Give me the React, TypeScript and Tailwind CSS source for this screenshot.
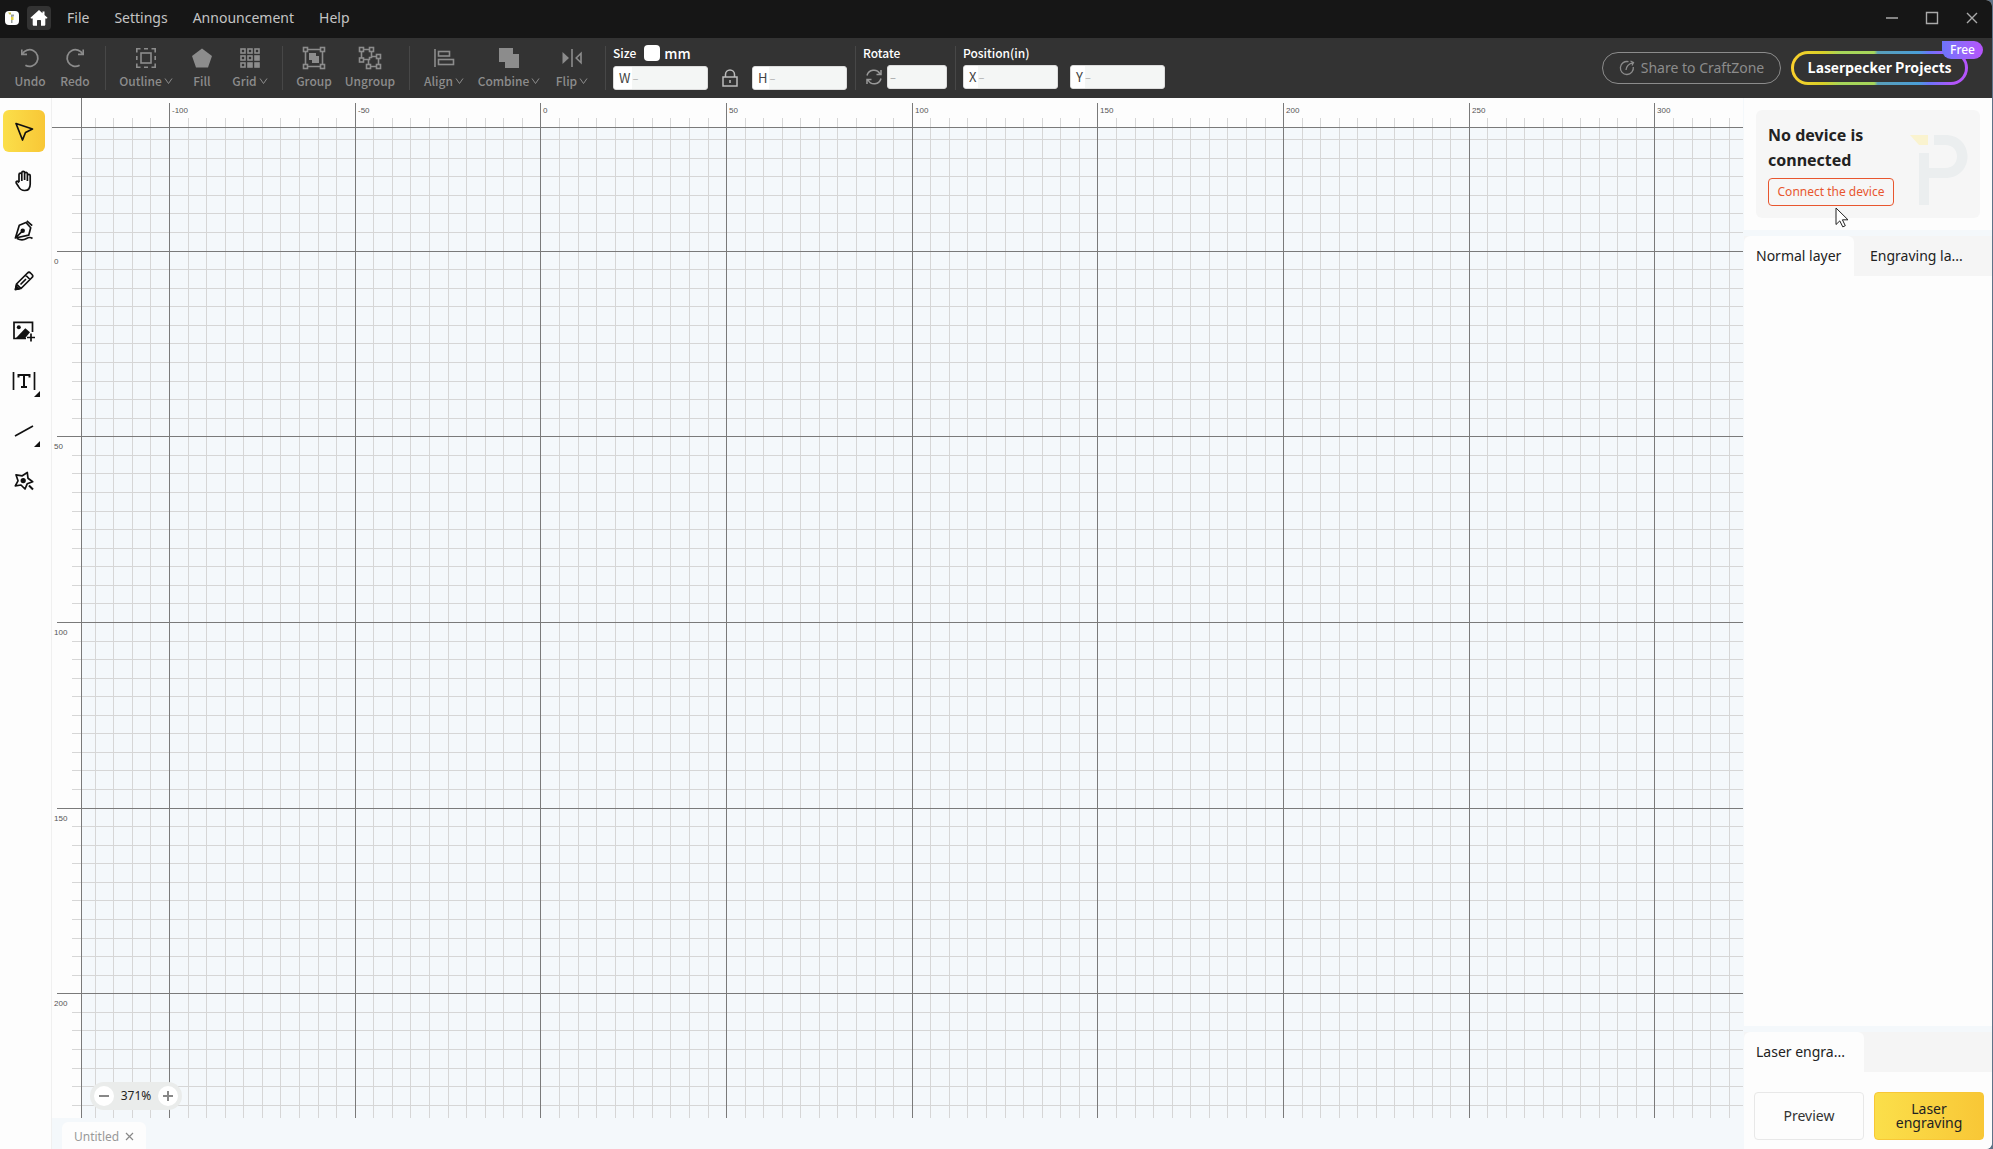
import { useEffect, useRef, useState } from "react";
import type { ReactNode } from "react";

const STEP = 185.67;
const RULER_X = 29;
const RULER_Y = 29;
const ZERO_X = 488.4;
const ZERO_Y = 152.6;

function range(from: number, to: number) {
  return Array.from({ length: Math.max(0, to - from + 1) }, (_, i) => from + i);
}

/** Millimetre grid with rulers along the top and left edges. */
function Grid() {
  const ref = useRef<SVGSVGElement>(null);
  const [size, setSize] = useState({ w: 1691, h: 1020 });
  useEffect(() => {
    const el = ref.current;
    if (!el) return;
    const update = () => setSize({ w: el.clientWidth, h: el.clientHeight });
    update();
    const observer = new ResizeObserver(update);
    observer.observe(el);
    return () => observer.disconnect();
  }, []);
  const minor = STEP / 10;
  const cols = range(Math.ceil((RULER_X + 1 - ZERO_X) / minor), Math.floor(size.w / minor));
  const rows = range(Math.ceil((RULER_Y + 1 - ZERO_Y) / minor), Math.floor(size.h / minor));
  const xs = cols.map((n) => ({ n, p: Math.round(ZERO_X + n * minor) })).filter((c) => c.p < size.w);
  const ys = rows.map((n) => ({ n, p: Math.round(ZERO_Y + n * minor) })).filter((c) => c.p < size.h);
  return (
    <svg ref={ref} className="block h-full w-full" shapeRendering="crispEdges">
      <rect x={RULER_X} y={RULER_Y} width="100%" height="100%" fill="#f4f8fb" />
      {xs.filter((c) => c.n % 10).map((c) => (
        <rect key={c.n} x={c.p} y={20} width={1} height={size.h} fill="#d6d6d6" />
      ))}
      {ys.filter((c) => c.n % 10).map((c) => (
        <rect key={c.n} x={20} y={c.p} width={size.w} height={1} fill="#d6d6d6" />
      ))}
      {xs.filter((c) => c.n % 10 === 0).map((c) => (
        <g key={c.n}>
          <rect x={c.p} y={5} width={1} height={size.h} fill="#7a7a7a" />
          <text x={c.p + 3} y={15} fontSize={8} fill="#555">{c.n * 5}</text>
        </g>
      ))}
      {ys.filter((c) => c.n % 10 === 0).map((c) => (
        <g key={c.n}>
          <rect x={5} y={c.p} width={size.w} height={1} fill="#7a7a7a" />
          <text x={2} y={c.p + 13} fontSize={8} fill="#555">{c.n * 5}</text>
        </g>
      ))}
      <rect x={0} y={RULER_Y} width={size.w} height={1} fill="#7a7a7a" />
      <rect x={RULER_X} y={0} width={1} height={size.h} fill="#7a7a7a" />
    </svg>
  );
}

function Chevron() {
  return (
    <svg width="9" height="8" viewBox="0 0 9 8" fill="none" stroke="currentColor">
      <path d="M1 1.5 4.5 6.5 8 1.5" />
    </svg>
  );
}

function Tool({ label, icon, width, menu }: { label: string; icon: ReactNode; width: string; menu?: boolean }) {
  return (
    <button className={`flex ${width} shrink-0 flex-col items-center gap-[3px] pt-2 text-[#8c8c8c]`}>
      <svg width="24" height="24" viewBox="0 0 24 24" fill="none" stroke="currentColor" strokeWidth="1.6">
        {icon}
      </svg>
      <span className="flex items-center gap-0.5 whitespace-nowrap text-[12px] leading-4 font-medium">
        {label}
        {menu && <Chevron />}
      </span>
    </button>
  );
}

function Sep() {
  return <div className="mt-2 h-11 w-px shrink-0 bg-[#474747]" />;
}

function Field({ name, label }: { name: string; label: string }) {
  return (
    <label className="flex h-6 w-[95px] shrink-0 overflow-hidden rounded-[3px] border border-[#dcdcdc] bg-[#f4f6f5] font-normal text-[#444]">
      <span className="bg-white pr-0.5 pl-[5px] text-[13px] leading-[22px]">{name}</span>
      <input aria-label={label} placeholder="–" className="w-full min-w-0 bg-transparent text-[11px] leading-[22px] outline-none placeholder:text-[#aaa]" />
    </label>
  );
}

const corner = (x: number, y: number) => <rect key={`${x}-${y}`} x={x} y={y} width="4" height="4" />;

const undo = (
  <>
    <path d="M3.8 3.5v4.9h5.2" strokeWidth="1.6" />
    <path d="M4.2 8.2A8.3 8.3 0 1 1 7.4 19.2" strokeWidth="1.8" />
  </>
);
const outline = (
  <>
    <path d="M2.8 6.5V2.8h3.7M17.5 2.8h3.7v3.7M21.2 17.5v3.7h-3.7M6.5 21.2H2.8v-3.7M10 2.8h4M10 21.2h4M2.8 10v4M21.2 10v4" />
    <rect x="7" y="7" width="10" height="10" />
  </>
);
const fill = <path d="M12 2.5 22 10l-4 11.5H6L2 10Z" fill="currentColor" stroke="none" />;
const gridIcon = (
  <>
    {[[3, 3], [10, 3], [17, 3], [3, 10], [10, 10], [3, 17]].map(([x, y]) => corner(x, y))}
    <g fill="currentColor">{[[17, 10], [10, 17], [17, 17]].map(([x, y]) => corner(x, y))}</g>
  </>
);
const group = (
  <>
    {[[1.5, 1.5], [18.5, 1.5], [1.5, 18.5], [18.5, 18.5]].map(([x, y]) => corner(x, y))}
    <path d="M5.5 3.5h13M5.5 20.5h13M3.5 5.5v13M20.5 5.5v13" />
    <path d="M7 7h7v3h3v7h-7v-3H7Z" fill="currentColor" stroke="none" />
  </>
);
const ungroup = (
  <>
    {[[1.5, 1.5], [11.5, 1.5], [1.5, 12], [18.5, 8.5], [18.5, 18.5], [8.5, 18.5]].map(([x, y]) => corner(x, y))}
    <path d="M5.5 3.5h6M3.5 5.5V12M13.5 5.5v6h-2v2H5.5M20.5 12.5v6M12.5 20.5h6M10.5 18.5v-5M13.5 10.5h5" />
  </>
);
const align = (
  <>
    <path d="M3 3v18" />
    <rect x="6.5" y="5.5" width="11" height="4.5" />
    <rect x="6.5" y="13.5" width="15" height="5" />
  </>
);
const combine = <path d="M2 2h14v6h6v14H8v-6H2Z" fill="currentColor" stroke="none" />;
const flip = (
  <>
    <path d="M12 3v18" />
    <path d="M2.5 6 9 12l-6.500 6Z" fill="currentColor" stroke="none" />
    <path d="M21 7.300v9.400L16.200 12Z" />
  </>
);

function SideTool({ label, children, active, more }: { label: string; children: ReactNode; active?: boolean; more?: boolean }) {
  return (
    <button
      aria-label={label}
      className={`relative flex size-[42px] items-center justify-center rounded-md text-[#111] ${active ? "bg-linear-to-r from-[#fbdf4a] to-[#f8c736]" : ""}`}
    >
      <svg width="24" height="24" viewBox="0 0 24 24" fill="none" stroke="currentColor" strokeWidth="1.7" strokeLinejoin="round">
        {children}
      </svg>
      {more && (
        <svg className="absolute right-[5px] bottom-[5px]" width="6" height="6" viewBox="0 0 6 6">
          <path d="M6 0v6H0Z" fill="currentColor" />
        </svg>
      )}
    </button>
  );
}

function TopBar() {
  return (
    <header className="flex h-[38px] shrink-0 items-center bg-[#161616] pb-0.5 pl-[5px] text-[#c4c4c4]">
      <span className="flex size-[14px] items-center justify-center rounded-[4px] bg-white">
        <svg width="8" height="12" viewBox="0 0 8 12">
          <path d="M0 .5h3v2H1.500Z" fill="#c9c24a" />
          <path d="M3 2.500h3V4.500H4.500V11H3Z" fill="#9aa0a0" />
          <path d="M3 5h2.500v3H3Z" fill="#e3d040" />
        </svg>
      </span>
      <button aria-label="Home" className="ml-2 flex size-6 items-center justify-center rounded-[4px] bg-[#333] text-white">
        <svg width="18" height="18" viewBox="0 0 18 18" fill="currentColor">
          <path d="M9 1 .7 8.600c-.3.400-.1.900.4.900H2.700V15.500c0 .8.500 1.300 1.300 1.300h3V12c0-.600.400-1 1-1h2c.6 0 1 .400 1 1v4.800h3c.8 0 1.300-.5 1.300-1.300V9.500h1.600c.5 0 .7-.5.4-.900L14.500 6V2.500h-2v1.700Z" />
        </svg>
      </button>
      <nav className="flex flex-1 gap-[25px] pl-4 font-['Noto_Sans'] text-[14px] leading-5">
        <button>File</button>
        <button>Settings</button>
        <button>Announcement</button>
        <button>Help</button>
      </nav>
      <div className="flex">
        {[
          { n: "Minimize", d: "M4 10h12" },
          { n: "Maximize", d: "M4.500 4.500h11v11h-11Z" },
          { n: "Close", d: "M5 5l10 10M15 5 5 15" },
        ].map((b) => (
          <button key={b.n} aria-label={b.n} className="flex w-10 justify-center">
            <svg width="20" height="20" viewBox="0 0 20 20" fill="none" stroke="#aaa" strokeWidth="1.400">
              <path d={b.d} />
            </svg>
          </button>
        ))}
      </div>
    </header>
  );
}

function Toolbar() {
  return (
    <div className="flex h-[60px] shrink-0 bg-[#333] pl-2 text-[12px] font-medium text-white">
      <Tool label="Undo" icon={undo} width="w-11" />
      <Tool label="Redo" icon={<g transform="translate(24 0) scale(-1 1)">{undo}</g>} width="w-[46px]" />
      <div className="w-[7px]" />
      <Sep />
      <div className="w-2" />
      <Tool label="Outline" icon={outline} width="w-16" menu />
      <Tool label="Fill" icon={fill} width="w-12" />
      <Tool label="Grid" icon={gridIcon} width="w-12" menu />
      <div className="w-2" />
      <Sep />
      <div className="w-[7px]" />
      <Tool label="Group" icon={group} width="w-12" />
      <Tool label="Ungroup" icon={ungroup} width="w-16" />
      <div className="w-[7px]" />
      <Sep />
      <div className="w-[7px]" />
      <Tool label="Align" icon={align} width="w-[54px]" menu />
      <Tool label="Combine" icon={combine} width="w-[76px]" menu />
      <Tool label="Flip" icon={flip} width="w-[50px]" menu />
      <div className="w-2" />
      <Sep />
      <div className="flex flex-col gap-[5px] pt-1.5 pr-2 pl-[7px]">
        <label className="flex h-[17px] items-center gap-2 leading-4">
          Size
          <span className="flex items-center gap-1 text-[14px]">
            <input type="checkbox" className="size-4 appearance-none rounded-[4px] bg-white" />
            mm
          </span>
        </label>
        <div className="flex">
          <Field name="W" label="Width" />
          <button aria-label="Lock ratio" className="flex w-11 items-center justify-center text-[#bbb]">
            <svg width="16" height="18" viewBox="0 0 16 18" fill="none" stroke="currentColor" strokeWidth="1.500">
              <path d="M1 8h14v9H1ZM3.500 8V5.500a4.500 4.500 0 0 1 9 0V8M8 11v3" />
            </svg>
          </button>
          <Field name="H" label="Height" />
        </div>
      </div>
      <Sep />
      <div className="flex flex-col gap-[3px] pt-[7px] pr-2 pl-[7px]">
        <span className="h-[17px] leading-4">Rotate</span>
        <div className="flex items-center">
          <svg className="mr-1 ml-0.5" width="18" height="18" viewBox="0 0 18 18" fill="none" stroke="#999" strokeWidth="1.500">
            <path d="M2 7.500A7 7 0 0 1 15 6M16 2v4.500h-4.500M16 10.500A7 7 0 0 1 3 12M2 16v-4.500h4.500" />
          </svg>
          <input aria-label="Rotate" placeholder="–" className="h-6 w-[60px] rounded-[3px] border border-[#dcdcdc] bg-[#f4f6f5] px-0.5 text-[11px] text-[#555] outline-none placeholder:text-[#aaa]" />
        </div>
      </div>
      <Sep />
      <div className="flex flex-col gap-[3px] px-[7px] pt-[7px]">
        <span className="h-[17px] leading-4">Position(in)</span>
        <div className="flex gap-3">
          <Field name="X" label="X position" />
          <Field name="Y" label="Y position" />
        </div>
      </div>
      <div className="flex flex-1 items-center justify-end gap-[10px] pr-6">
        <button className="flex h-8 w-[179px] items-center justify-center gap-1.5 rounded-full border border-[#8c8c8c] pb-px font-['Noto_Sans'] text-[14px] font-normal whitespace-nowrap text-[#8c8c8c]">
          <svg width="16" height="16" viewBox="0 0 16 16" fill="none" stroke="currentColor" strokeWidth="1.300">
            <path d="M9.500 1.700A6.500 6.500 0 1 0 14.300 7M7 10c.3-3.500 2.500-6 7-7.300M11.500 1l3 1.500-1.500 3" />
          </svg>
          Share to CraftZone
        </button>
        <div className="relative">
          <button className="h-[34px] w-[177px] rounded-full bg-[linear-gradient(90deg,#fbd02c_0%,#d8d028_18%,#a6d65a_28%,#a6d65a_47%,#5a9fb8_49%,#4a9fd8_72%,#6b74fb_78%,#b455fb_92%)] p-[3px]">
            <span className="flex h-full items-center justify-center rounded-full bg-[#333] pb-px text-[14px] font-bold whitespace-nowrap">Laserpecker Projects</span>
          </button>
          <span className="absolute -top-2.5 -right-[15px] h-[18px] rounded-r-full rounded-bl-full bg-linear-to-r from-[#6b74fb] to-[#b653fb] px-2 font-['Noto_Sans'] text-[12px] leading-[18px]">
            Free
          </span>
        </div>
      </div>
    </div>
  );
}

function Sidebar() {
  return (
    <aside className="flex w-[52px] shrink-0 flex-col gap-2 border-r border-[#f0f0f0] bg-[#fdfdfd] pt-3 pl-[3px]">
      <SideTool label="Select" active>
        <path d="M4 4.500 20.500 10l-7 3.500L10.500 21Z" />
      </SideTool>
      <SideTool label="Pan">
        <path d="M7 13V5.500a1.400 1.400 0 0 1 2.800 0V12M9.800 11V3.800a1.400 1.400 0 0 1 2.800 0V11M12.600 11V4.800a1.400 1.400 0 0 1 2.800 0V12M15.400 11V6.800a1.400 1.400 0 0 1 2.800 0V15c0 4-2 6.500-5.500 6.500-3.200 0-5-1.500-6.200-4L4.200 14c-.6-1.500.8-2.300 1.800-1.300L7 13.700" />
      </SideTool>
      <SideTool label="Pen">
        <path d="M3.400 19 7.300 6.200 14 3.500l4.700 5.300-2 7.400ZM3.400 19l7-6.800M14.800 1.800l5.400 4.800M5 19.500c4 2 7 1.500 9.500 0s4-1.500 6 0" />
        <circle cx="10.700" cy="11.800" r="1.400" fill="currentColor" />
      </SideTool>
      <SideTool label="Pencil">
        <path d="M3.500 20.500 4.500 15 15.500 4c1-1 2-1 3 0l1.500 1.500c1 1 1 2 0 3L9 19.500ZM13.500 6l4.500 4.500M8.500 15.500 14 10M4.500 15 9 19.500" />
        <path d="M3.500 20.500 4.200 17 7 19.800Z" fill="currentColor" />
      </SideTool>
      <SideTool label="Image">
        <path d="M14 19.500H2V3.300h18.500V13M19 14.500v8M15 18.500h8" strokeLinejoin="miter" />
        <circle cx="6.800" cy="8.200" r="2" fill="currentColor" stroke="none" />
        <path d="M4 19 13.300 9.300l4.700 4-4.700 5.700Z" fill="currentColor" stroke="none" />
      </SideTool>
      <SideTool label="Text" more>
        <path d="M1.500 3v18M22.500 3v18" />
        <path d="M6.500 8.500V6h11v2.500M12 6v12M9 18h6" strokeWidth="2" strokeLinejoin="miter" />
      </SideTool>
      <SideTool label="Line" more>
        <path d="M3 17 21 7" />
      </SideTool>
      <SideTool label="Magic">
        <path d="M15.300 3.500 16 9.300l4.700 3.400-5.500 2.100L13 20l-4-4-5.700.8L6 11.800 4 5.800l6.300 1Z" />
        <circle cx="11.200" cy="11.600" r="1.800" fill="currentColor" />
        <path d="m17 16.500 4 4" strokeWidth="2" />
      </SideTool>
    </aside>
  );
}

function RightPanel() {
  return (
    <aside className="flex w-[249px] shrink-0 flex-col border-l border-[#f4f8fb] bg-[#fdfdfd] font-['Noto_Sans'] text-[14px] text-[#222]">
      <div className="px-3 py-3">
        <section className="relative flex h-[108px] flex-col items-start rounded-md bg-[#f6f6f6] px-3 pt-[13px]">
          <h2 className="w-32 text-[16px] leading-[25px] font-bold">No device is connected</h2>
          <button className="mt-[5px] h-7 w-[126px] rounded-[4px] border border-[#e8562f] text-[12px] leading-[26px] whitespace-nowrap text-[#e8562f]">
            Connect the device
          </button>
          <svg className="absolute top-6 right-3" width="58" height="72" viewBox="0 0 58 72">
            <path d="M0 1h18v10H9Z" fill="#faf3cf" />
            <path d="M24 1h11c30 0 30 43 0 43H19v27H9V19h10v15h16c16 0 16-23 0-23H24Z" fill="#ebeeef" />
          </svg>
          <svg className="absolute top-[97px] left-[79px]" width="14" height="21" viewBox="0 0 14 21">
            <path d="M1 1v16.500l3.800-3.600 3 6 2.500-1.200-2.900-5.900H13Z" fill="#fff" stroke="#222" />
          </svg>
        </section>
      </div>
      <div className="flex border-t-[6px] border-[#f4f8fb] bg-[#f5f5f5]">
        <button className="h-10 w-[110px] rounded-t-md bg-[#fdfdfd] px-3 pb-0.5 text-left whitespace-nowrap">Normal layer</button>
        <button className="h-10 px-4 pb-0.5 text-left whitespace-nowrap">Engraving la...</button>
      </div>
      <div className="flex-1" />
      <div className="flex border-t-[6px] border-[#f4f8fb] bg-[#f5f5f5]">
        <button className="h-10 w-[120px] rounded-t-md bg-[#fdfdfd] px-3 pb-0.5 text-left">Laser engra...</button>
      </div>
      <div className="grid grid-cols-2 gap-[10px] pt-5 pr-2 pb-[9px] pl-[10px]">
        <button className="h-12 rounded-[4px] border border-[#e8e8e8] pb-0.5 text-[#333]">Preview</button>
        <button className="h-12 rounded-[4px] border border-[#f8c736] bg-linear-to-r from-[#fbdf4a] to-[#f8c736] px-4 leading-[14px]">
          Laser engraving
        </button>
      </div>
    </aside>
  );
}

export default function App() {
  return (
    <div className="h-screen bg-[#5f7388] pr-px">
      <div className="flex h-full flex-col overflow-hidden rounded-r-md bg-white font-['Noto_Sans_CJK_SC','Noto_Sans',sans-serif]">
        <TopBar />
        <Toolbar />
        <div className="flex min-h-0 flex-1">
          <Sidebar />
          <main className="flex min-w-0 flex-1 flex-col bg-[#fdfdfd]">
            <div className="relative min-h-0 flex-1 font-['Liberation_Sans',sans-serif]">
              <Grid />
              <div className="absolute bottom-2 left-[38px] flex h-7 w-[92px] items-center justify-between rounded-full bg-[#eaeceb] px-1 font-['Noto_Sans'] text-[12px] text-[#222]">
                <button aria-label="Zoom out" className="flex size-5 items-center justify-center rounded-full bg-white">
                  <svg width="12" height="12" stroke="#888" strokeWidth="2"><path d="M1 6h10" /></svg>
                </button>
                371%
                <button aria-label="Zoom in" className="flex size-5 items-center justify-center rounded-full bg-white">
                  <svg width="12" height="12" stroke="#888" strokeWidth="2"><path d="M1 6h10M6 1v10" /></svg>
                </button>
              </div>
            </div>
            <div className="flex h-[31px] shrink-0 items-end bg-[#f4f8fb] pl-[10px]">
              <div className="flex h-[27px] items-center gap-1.5 rounded-t-md bg-[#fdfdfd] px-3 pt-0.5 font-['Noto_Sans'] text-[12px] text-[#999]">
                Untitled
                <button aria-label="Close tab">
                  <svg width="9" height="9" stroke="#888" strokeWidth="1.200"><path d="m1 1 7 7M8 1 1 8" /></svg>
                </button>
              </div>
            </div>
          </main>
          <RightPanel />
        </div>
      </div>
    </div>
  );
}
